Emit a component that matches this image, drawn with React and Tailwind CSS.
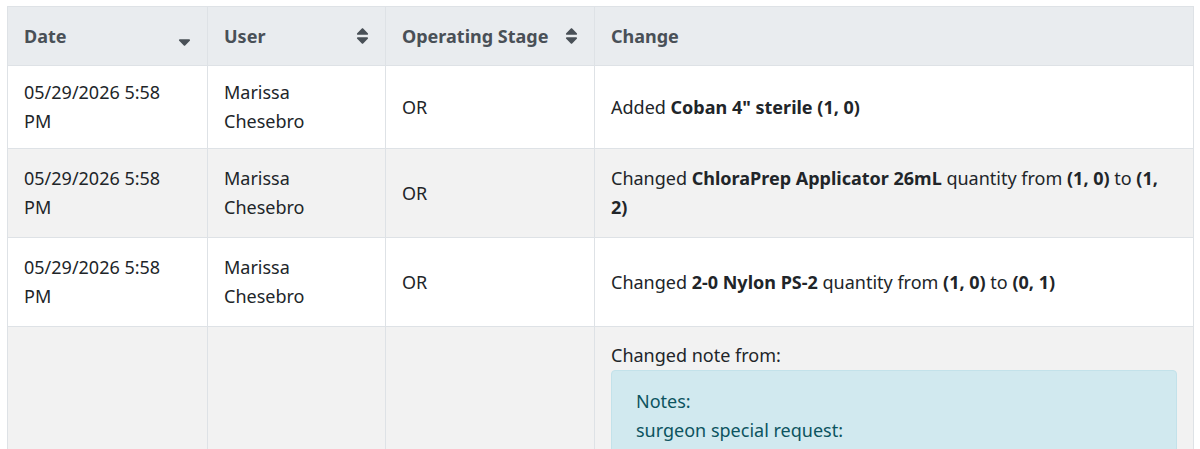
import React from 'react';
import { FaSort, FaSortDown } from 'react-icons/fa';

const rows = [
  {
    date: '05/29/2026 5:58 PM',
    user: 'Marissa Chesebro',
    stage: 'OR',
    change: (
      <>
        Added <b>Coban 4" sterile (1, 0)</b>
      </>
    ),
  },
  {
    date: '05/29/2026 5:58 PM',
    user: 'Marissa Chesebro',
    stage: 'OR',
    change: (
      <>
        Changed <b>ChloraPrep Applicator 26mL</b> quantity from <b>(1, 0)</b> to <b>(1, 2)</b>
      </>
    ),
  },
  {
    date: '05/29/2026 5:58 PM',
    user: 'Marissa Chesebro',
    stage: 'OR',
    change: (
      <>
        Changed <b>2-0 Nylon PS-2</b> quantity from <b>(1, 0)</b> to <b>(0, 1)</b>
      </>
    ),
  },
];

function HeaderCell({ label, icon }) {
  return (
    <th className="border border-[#dee2e6] px-4 h-[59px] text-left font-bold text-[#495057]">
      <div className="flex items-center justify-between">
        <span>{label}</span>
        {icon}
      </div>
    </th>
  );
}

export default function App() {
  return (
    <div className="bg-white h-[449px] overflow-hidden pt-[6px] px-[7px]" style={{ fontFamily: '"Noto Sans", sans-serif' }}>
      <table className="table-fixed border-collapse w-[1186px] text-[18px] leading-[29px] text-[#212529]">
        <colgroup>
          <col className="w-[200px]" />
          <col className="w-[178px]" />
          <col className="w-[209px]" />
          <col className="w-[599px]" />
        </colgroup>
        <thead className="bg-[#e9ecef]">
          <tr>
            <HeaderCell label="Date" icon={<FaSortDown className="text-[#495057] w-[13px] h-[20px] mt-1" />} />
            <HeaderCell label="User" icon={<FaSort className="text-[#495057] w-[13px] h-[20px]" />} />
            <HeaderCell label="Operating Stage" icon={<FaSort className="text-[#495057] w-[13px] h-[20px]" />} />
            <HeaderCell label="Change" />
          </tr>
        </thead>
        <tbody>
          {rows.map((r, i) => {
            const pad = i === 0 ? 'py-[12px]' : 'py-[15px]';
            return (
              <tr key={i} className={i % 2 === 1 ? 'bg-[#f2f2f2]' : 'bg-white'}>
                <td className={`border border-[#dee2e6] px-4 ${pad} align-middle`}>{r.date}</td>
                <td className={`border border-[#dee2e6] px-4 ${pad} align-middle`}>{r.user}</td>
                <td className={`border border-[#dee2e6] px-4 ${pad} align-middle`}>{r.stage}</td>
                <td className={`border border-[#dee2e6] px-4 ${pad} align-middle`}>{r.change}</td>
              </tr>
            );
          })}
          <tr className="bg-[#f2f2f2]">
            <td className="border border-[#dee2e6] px-4 py-[13px]"></td>
            <td className="border border-[#dee2e6] px-4 py-[13px]"></td>
            <td className="border border-[#dee2e6] px-4 py-[13px]"></td>
            <td className="border border-[#dee2e6] px-4 pt-[14px] pb-[13px] align-top">
              <div>Changed note from:</div>
              <div className="rounded bg-[#d1e9ef] border border-[#c3e2ea] text-[#0c5460] px-6 py-4">
                <div>Notes:</div>
                <div>surgeon special request:</div>
                <div>extra sponges</div>
              </div>
            </td>
          </tr>
        </tbody>
      </table>
    </div>
  );
}
